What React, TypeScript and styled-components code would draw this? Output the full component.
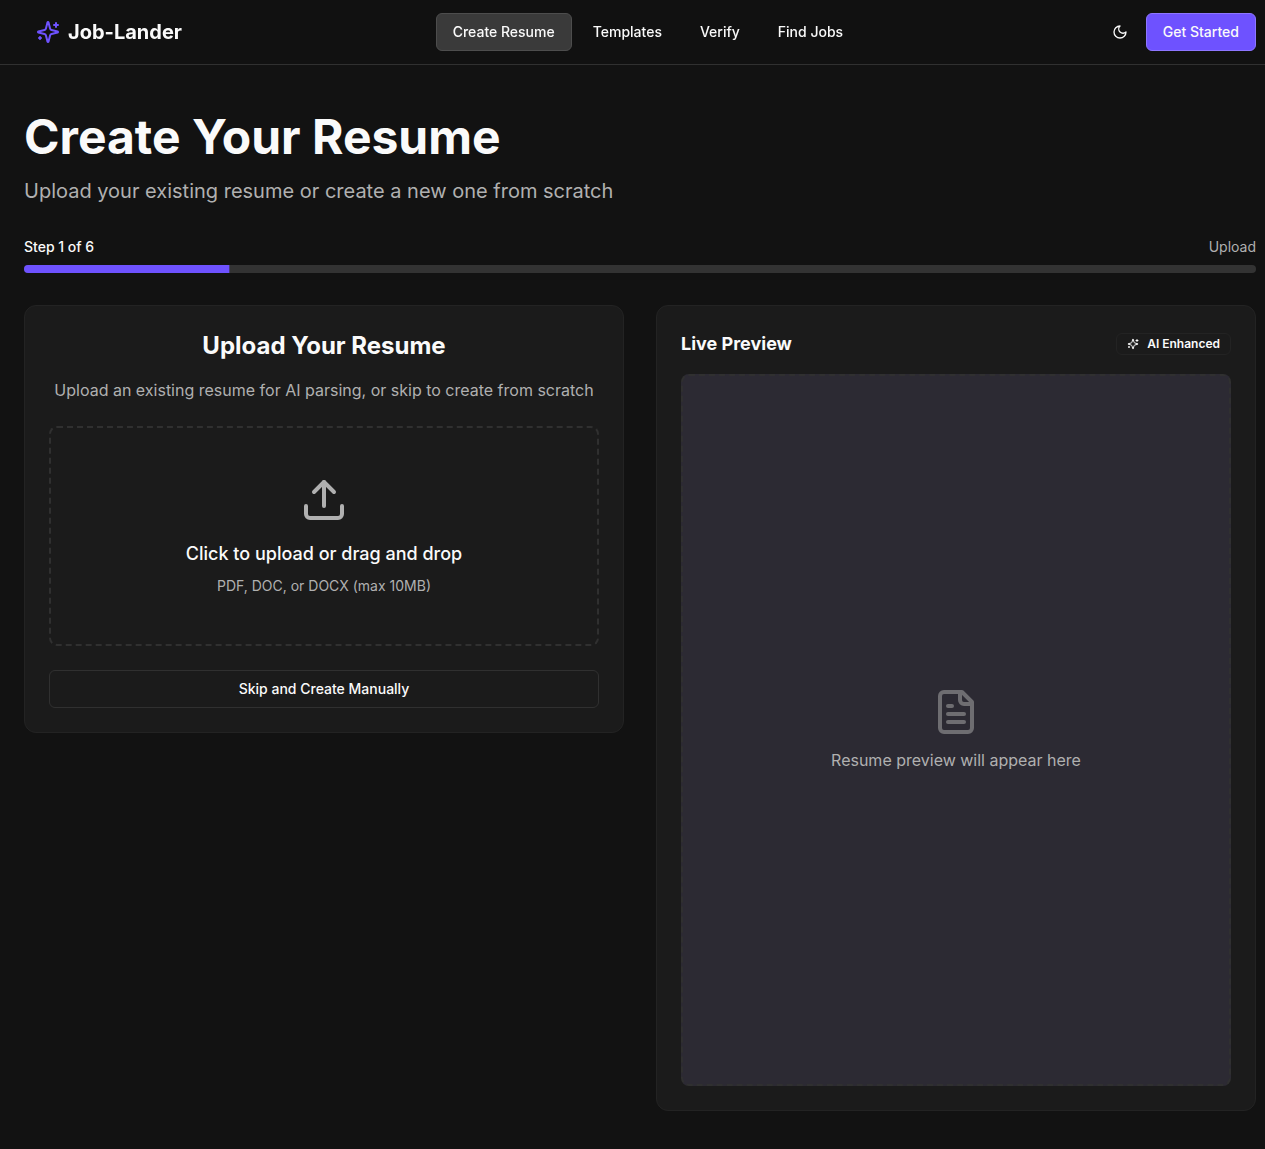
import React, { useState } from "react";
import styled, { createGlobalStyle } from "styled-components";
import { Upload } from "lucide-react";

const TOTAL_STEPS = 6;

const color = {
  page: "#121212",
  card: "#1b1b1b",
  cardBorder: "#232323",
  line: "#303030",
  track: "#333333",
  active: "#3a3a3a",
  activeBorder: "#4d4d4d",
  muted: "#2c2a33",
  text: "#fafafa",
  subtle: "#b0b0b0",
  primary: "#6e52ff",
  primaryBorder: "#8d76ff",
};

const GlobalStyle = createGlobalStyle`
  *, *::before, *::after {
    box-sizing: border-box;
  }
  body {
    margin: 0;
    background: ${color.page};
    color: ${color.text};
    font-family: Inter, "Liberation Sans", sans-serif;
    font-size: 16px;
    line-height: 24px;
  }
  h1, h2, p {
    margin: 0;
  }
  svg {
    display: block;
    flex-shrink: 0;
  }
`;

const Header = styled.header`
  position: sticky;
  top: 0;
  z-index: 10;
  border-bottom: 1px solid ${color.line};
  background: rgba(18, 18, 18, 0.95);
  backdrop-filter: blur(8px);
`;

const HeaderInner = styled.div`
  display: flex;
  align-items: center;
  justify-content: space-between;
  height: 64px;
  padding: 0 9px 0 24px;
`;

const Logo = styled.a`
  display: flex;
  align-items: center;
  gap: 8px;
  padding: 0 12px;
  color: inherit;
  font-size: 20px;
  font-weight: 700;
  line-height: 28px;
  text-decoration: none;

  svg {
    color: ${color.primary};
  }
`;

const Nav = styled.nav`
  display: flex;
  gap: 4px;
`;

const NavLink = styled.a<{ $active?: boolean }>`
  padding: 8px 16px;
  border: 1px solid ${(p) => (p.$active ? color.activeBorder : "transparent")};
  border-radius: 6px;
  background: ${(p) => (p.$active ? color.active : "transparent")};
  color: inherit;
  font-size: 14px;
  font-weight: 500;
  line-height: 20px;
  text-decoration: none;
`;

const Actions = styled.div`
  display: flex;
  align-items: center;
  gap: 8px;
`;

const Button = styled.button<{ $primary?: boolean }>`
  padding: 8px 16px;
  border: 1px solid ${(p) => (p.$primary ? color.primaryBorder : color.line)};
  border-radius: 6px;
  background: ${(p) => (p.$primary ? color.primary : "transparent")};
  color: inherit;
  font: inherit;
  font-size: 14px;
  font-weight: 500;
  line-height: 20px;
  cursor: pointer;
`;

const IconButton = styled.button`
  display: flex;
  align-items: center;
  justify-content: center;
  width: 36px;
  height: 36px;
  padding: 0;
  border: 0;
  border-radius: 6px;
  background: transparent;
  color: inherit;
  cursor: pointer;
`;

const Main = styled.main`
  padding: 48px 9px 24px 24px;
`;

const PageTitle = styled.h1`
  font-size: 48px;
  font-weight: 700;
  line-height: 48px;
`;

const PageSubtitle = styled.p`
  margin-top: 16px;
  color: ${color.subtle};
  font-size: 20px;
  line-height: 28px;
`;

const Steps = styled.section`
  margin: 32px 0;
`;

const StepLabels = styled.div`
  display: flex;
  justify-content: space-between;
  margin-bottom: 8px;
  font-size: 14px;
  line-height: 20px;
`;

const StepCount = styled.span`
  font-weight: 500;
`;

const StepName = styled.span`
  color: ${color.subtle};
`;

const Track = styled.div`
  height: 8px;
  overflow: hidden;
  border-radius: 4px;
  background: ${color.track};
`;

const Fill = styled.div`
  height: 100%;
  background: ${color.primary};
`;

const Columns = styled.div`
  display: grid;
  grid-template-columns: 1fr 1fr;
  align-items: start;
  gap: 32px;
`;

const Card = styled.section`
  display: flex;
  flex-direction: column;
  padding: 24px;
  border: 1px solid ${color.cardBorder};
  border-radius: 12px;
  background: ${color.card};
`;

const UploadTitle = styled.h2`
  font-size: 24px;
  font-weight: 700;
  line-height: 32px;
  text-align: center;
`;

const UploadText = styled.p`
  margin: 16px 0 24px;
  color: ${color.subtle};
  text-align: center;
`;

const DropZone = styled.label`
  display: flex;
  flex-direction: column;
  align-items: center;
  margin-bottom: 24px;
  padding: 48px;
  border: 2px dashed ${color.line};
  border-radius: 8px;
  cursor: pointer;

  svg {
    color: ${color.subtle};
  }
`;

const DropTitle = styled.span`
  margin: 16px 0 8px;
  font-size: 18px;
  font-weight: 500;
  line-height: 28px;
`;

const DropHint = styled.span`
  color: ${color.subtle};
  font-size: 14px;
  line-height: 20px;
`;

const PreviewHeader = styled.div`
  display: flex;
  align-items: center;
  justify-content: space-between;
  margin-bottom: 16px;
`;

const PreviewTitle = styled.h2`
  font-size: 18px;
  font-weight: 700;
  line-height: 28px;
`;

const Badge = styled.span`
  display: flex;
  align-items: center;
  gap: 8px;
  padding: 2px 10px;
  border: 1px solid ${color.cardBorder};
  border-radius: 6px;
  font-size: 12px;
  font-weight: 600;
  line-height: 16px;
`;

const PreviewPane = styled.div`
  display: flex;
  flex-direction: column;
  align-items: center;
  justify-content: center;
  gap: 12px;
  aspect-ratio: 17 / 22;
  border: 2px dashed ${color.line};
  border-radius: 8px;
  background: ${color.muted};
  color: ${color.subtle};

  svg {
    opacity: 0.5;
  }
`;

const iconPaths = {
  sparkles: [
    "M9.937 15.5A2 2 0 0 0 8.5 14.063l-6.135-1.582a.5.5 0 0 1 0-.962L8.5 9.936A2 2 0 0 0 9.937 8.5l1.582-6.135a.5.5 0 0 1 .963 0L14.063 8.5A2 2 0 0 0 15.5 9.937l6.135 1.581a.5.5 0 0 1 0 .964L15.5 14.063a2 2 0 0 0-1.437 1.437l-1.582 6.135a.5.5 0 0 1-.963 0z",
    "M20 3v4",
    "M22 5h-4",
    "M4 17v2",
    "M5 18H3",
  ],
  moon: ["M12 3a6 6 0 0 0 9 9 9 9 0 1 1-9-9Z"],
  document: [
    "M15 2H6a2 2 0 0 0-2 2v16a2 2 0 0 0 2 2h12a2 2 0 0 0 2-2V7Z",
    "M14 2v4a2 2 0 0 0 2 2h4",
    "M10 9H8",
    "M16 13H8",
    "M16 17H8",
  ],
};

function Icon({ name, size }: { name: keyof typeof iconPaths; size: number }) {
  return (
    <svg
      width={size}
      height={size}
      viewBox="0 0 24 24"
      fill="none"
      stroke="currentColor"
      strokeWidth={2}
      strokeLinecap="round"
      strokeLinejoin="round"
      aria-hidden="true"
    >
      {iconPaths[name].map((d) => (
        <path key={d} d={d} />
      ))}
    </svg>
  );
}

const navItems = ["Create Resume", "Templates", "Verify", "Find Jobs"];

export default function App() {
  const [step] = useState(1);

  return (
    <>
      <GlobalStyle />
      <Header>
        <HeaderInner>
          <Logo href="#home">
            <Icon name="sparkles" size={24} />
            Job-Lander
          </Logo>
          <Nav aria-label="Main">
            {navItems.map((item, index) => (
              <NavLink key={item} href="#" $active={index === 0}>
                {item}
              </NavLink>
            ))}
          </Nav>
          <Actions>
            <IconButton type="button" aria-label="Toggle theme">
              <Icon name="moon" size={16} />
            </IconButton>
            <Button type="button" $primary>
              Get Started
            </Button>
          </Actions>
        </HeaderInner>
      </Header>
      <Main>
        <PageTitle>Create Your Resume</PageTitle>
        <PageSubtitle>
          Upload your existing resume or create a new one from scratch
        </PageSubtitle>
        <Steps>
          <StepLabels>
            <StepCount>{`Step ${step} of ${TOTAL_STEPS}`}</StepCount>
            <StepName>Upload</StepName>
          </StepLabels>
          <Track
            role="progressbar"
            aria-label="Progress"
            aria-valuemin={0}
            aria-valuemax={TOTAL_STEPS}
            aria-valuenow={step}
          >
            <Fill
              style={{ transform: `translateX(-${100 - (step / TOTAL_STEPS) * 100}%)` }}
            />
          </Track>
        </Steps>
        <Columns>
          <Card>
            <UploadTitle>Upload Your Resume</UploadTitle>
            <UploadText>
              Upload an existing resume for AI parsing, or skip to create from scratch
            </UploadText>
            <DropZone>
              <input type="file" accept=".pdf,.doc,.docx" hidden />
              <Upload size={48} />
              <DropTitle>Click to upload or drag and drop</DropTitle>
              <DropHint>PDF, DOC, or DOCX (max 10MB)</DropHint>
            </DropZone>
            <Button type="button">Skip and Create Manually</Button>
          </Card>
          <Card>
            <PreviewHeader>
              <PreviewTitle>Live Preview</PreviewTitle>
              <Badge>
                <Icon name="sparkles" size={12} />
                AI Enhanced
              </Badge>
            </PreviewHeader>
            <PreviewPane>
              <Icon name="document" size={48} />
              <p>Resume preview will appear here</p>
            </PreviewPane>
          </Card>
        </Columns>
      </Main>
    </>
  );
}
